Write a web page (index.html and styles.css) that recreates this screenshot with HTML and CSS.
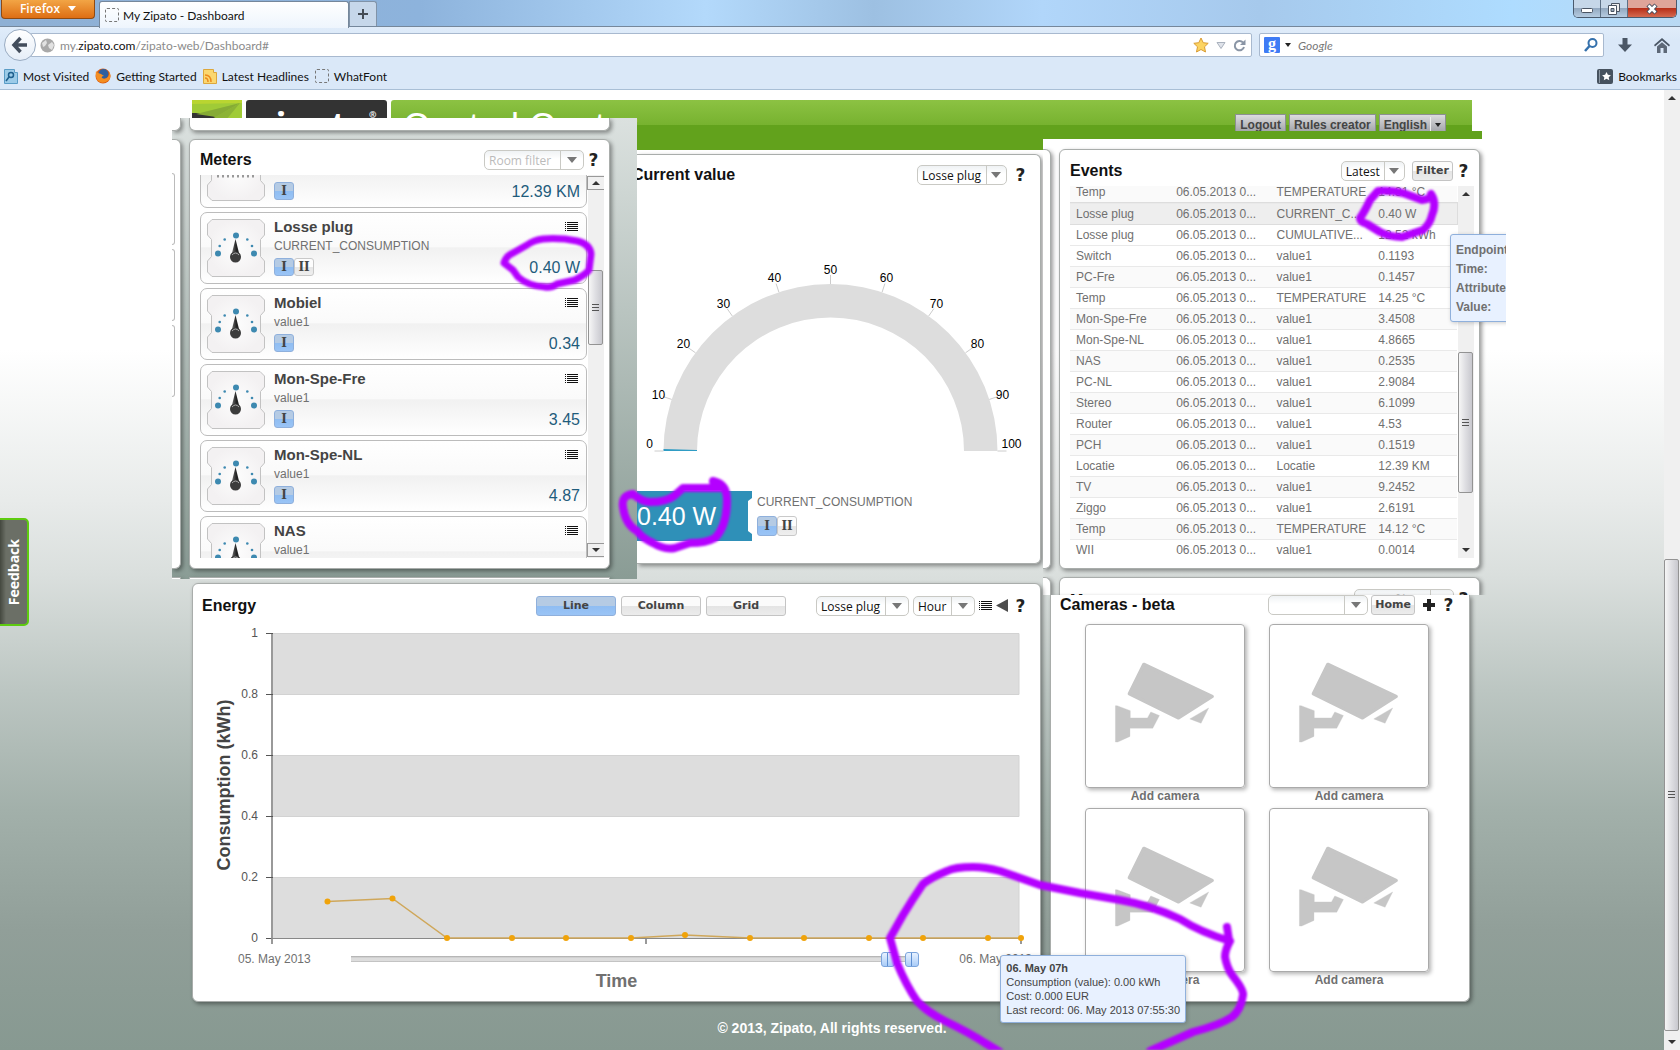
FILE: index.html
```html
<!DOCTYPE html>
<html lang="en">
<head>
    <meta charset="UTF-8">
    <meta name="viewport" content="width=device-width, initial-scale=1.0">
    <title>My Zipato - Dashboard</title>
    <link rel="stylesheet" href="styles.css">
</head>
<body>

    <!-- shared icons -->
    <svg width="0" height="0" class="defs">
        <defs>
            <radialGradient id="plate"><stop offset="0" stop-color="#fdfdfd"/><stop offset="1" stop-color="#f3f1f2"/></radialGradient>
            <linearGradient id="needle" x1="0" x2="1"><stop offset="0" stop-color="#777"/><stop offset="0.6" stop-color="#222"/></linearGradient>
        </defs>
        <symbol id="meter" viewBox="0 0 58 58">
            <path d="M5 .5h48l4.500 4.500v11l-4 4.500v17l4 4.500v11l-4.500 4.500H5L.5 53V42l4-4.500v-17L.5 16V5z" fill="url(#plate)" stroke="#c2c2c2"/>
            <g fill="#3d89b0">
                <circle cx="29" cy="16.500" r="3"/><circle cx="11" cy="34.500" r="3"/><circle cx="47" cy="34.500" r="3"/>
                <circle cx="17.700" cy="20.500" r="1.300"/><circle cx="40.300" cy="20.500" r="1.300"/>
                <circle cx="12.700" cy="27" r="1.300"/><circle cx="45" cy="27" r="1.300"/>
            </g>
            <path d="M28.500 20l4 16h-8z" fill="url(#needle)"/>
            <circle cx="28.500" cy="38" r="5.500" fill="#3c3c3c"/>
            <path d="M25 36q3.500-4 7 0" fill="none" stroke="#aaa"/>
        </symbol>
        <symbol id="list" viewBox="0 0 13 10">
            <path d="M0 .5h1M2 .5h11M0 2.500h1M2 2.500h11M0 4.500h1M2 4.500h11M0 6.500h1M2 6.500h11M0 8.500h1M2 8.500h11" stroke="#111"/>
        </symbol>
        <symbol id="camera" viewBox="0 0 474 490">
            <g fill="#c6c6c6" stroke="#c6c6c6" stroke-linejoin="round">
                <path d="M173 119L380 216L278 281L129 208z" stroke-width="10"/>
                <path d="M87 244h5l40 15v22h52l10-18 26 11-20 38h-69v25l-37 17h-7z" stroke-width="1"/>
                <path d="M369 251l-23 46-34-13z" stroke-width="1"/>
            </g>
        </symbol>
    </svg>

    <div class="chrome">
        <div class="titlebar">
            <button class="firefox">Firefox <i class="tri white"></i></button>
            <div class="tab"><i class="blank"></i>My Zipato - Dashboard</div>
            <button class="newtab" aria-label="New tab"><svg width="12" height="12" viewBox="0 0 12 12"><path d="M6 1v10M1 6h10" stroke="#444c55" stroke-width="2"/></svg></button>
            <div class="winbtns">
                <button class="min" aria-label="Minimize"><svg width="14" height="14" viewBox="0 0 14 14"><rect x="1.500" y="6.500" width="11" height="4" rx="1" fill="#fff" stroke="#4a5462"/></svg></button>
                <button class="max" aria-label="Restore"><svg width="14" height="14" viewBox="0 0 14 14"><path d="M4.500 1.500h8v8h-8z" fill="#eee" stroke="#4a5462"/><path d="M1.500 3.500h8v9h-8z" fill="#fff" stroke="#4a5462"/><path d="M4 6.500h3v3H4z" fill="#9ab" stroke="#4a5462"/></svg></button>
                <button class="close" aria-label="Close"><svg width="12" height="12" viewBox="0 0 12 12"><path d="M2 2l8 8M10 2l-8 8" stroke="#444b5c" stroke-width="4.500"/><path d="M2.500 2.500l7 7M9.500 2.500l-7 7" stroke="#fff" stroke-width="2.500"/></svg></button>
            </div>
        </div>

        <div class="navbar">
            <button class="back" aria-label="Back"><svg width="18" height="18" viewBox="0 0 18 18"><path d="M9.500 2L3 9l6.500 7M3 9h13" fill="none" stroke="#434d5c" stroke-width="3.500"/></svg></button>
            <div class="urlbar">
                <svg width="15" height="15" viewBox="0 0 15 15"><circle cx="7.500" cy="7.500" r="7" fill="#a9a9a9"/><path d="M2 5l4-3 1 3-2 3-2 1zM8 7l4-3 2 3-2 5-3-2z" fill="#e2e2e2"/></svg>
                <span class="url">my.<b>zipato.com</b>/zipato-web/Dashboard#</span>
                <svg width="16" height="16" viewBox="0 0 16 16"><path d="M8 1l2.200 4.700 5 .6-3.700 3.500 1 5.200L8 12.500 3.500 15l1-5.200L.8 6.300l5-.6z" fill="#fcd462" stroke="#d99c33"/></svg>
                <svg width="10" height="9" viewBox="0 0 10 9"><path d="M1 1.500h8L5 7.500z" fill="#dfe3ea" stroke="#a9b1bd"/></svg>
                <svg width="13" height="13" viewBox="0 0 13 13"><path d="M10 3.500A4.700 4.700 0 1 0 11 8" fill="none" stroke="#8a95a5" stroke-width="2"/><path d="M12.500.5v5.500H7z" fill="#8a95a5"/></svg>
            </div>
            <div class="search">
                <span class="g">g</span><i class="tri small"></i>
                <input type="text" placeholder="Google" aria-label="Search">
                <svg width="14" height="14" viewBox="0 0 14 14"><circle cx="8.500" cy="5" r="4" fill="none" stroke="#3571ac" stroke-width="2"/><path d="M5.500 8L1 13" stroke="#3571ac" stroke-width="2.500"/></svg>
            </div>
            <svg class="dl" width="14" height="14" viewBox="0 0 14 14"><path d="M4.500 0h5v6.500H14L7 14 0 6.500h4.500z" fill="#4b5766"/></svg>
            <svg width="16" height="15" viewBox="0 0 16 15"><path d="M8 0l8 7-1 1.500L8 2.500 1 8.500 0 7z" fill="#4b5766"/><path d="M3 8.500l5-4.300 5 4.300V15h-3.500v-5h-3v5H3z" fill="#5d6877"/></svg>
        </div>

        <div class="bookmarks">
            <a href="#"><svg width="14" height="15" viewBox="0 0 14 15"><path d="M.5.5h10v3h3v11H.5z" fill="#9ccbe8" stroke="#5a9cc6"/><circle cx="7" cy="6" r="2.500" fill="none" stroke="#1e5f8e" stroke-width="1.500"/><path d="M5 8l-3 4" stroke="#1e5f8e" stroke-width="1.500"/></svg>Most Visited</a>
            <a href="#"><svg width="16" height="16" viewBox="0 0 16 16"><circle cx="8" cy="8" r="7.500" fill="#d95b12"/><circle cx="8.500" cy="6" r="5" fill="#2e5f9f"/><path d="M1 3q2 3 5 3l3 2q-3 0-2 2 3 2 6-1 2-3 1-6 3 5 0 9-6 5-11 1Q0 9 1 3z" fill="#f48e21"/></svg>Getting Started</a>
            <a href="#"><svg width="14" height="15" viewBox="0 0 14 15"><path d="M.5.5h10v3h3v11H.5z" fill="#fbd76f" stroke="#dca73c"/><path d="M2 6q6 0 6 7M2 9q3 0 3 4" fill="none" stroke="#ec8a1c" stroke-width="1.500"/></svg>Latest Headlines</a>
            <a href="#"><i class="blank"></i>WhatFont</a>
            <a href="#" class="right"><svg width="16" height="15" viewBox="0 0 16 15"><rect width="16" height="15" rx="2" fill="#46525f"/><path d="M2.500 1v13" stroke="#8b97a3"/><path d="M9.500 3l1.400 2.800 3 .4-2.200 2 .6 3-2.800-1.500-2.700 1.500.5-3-2.200-2 3-.4z" fill="#fff"/></svg>Bookmarks</a>
        </div>
    </div>

    <div class="viewport">
        <div class="page">
            <header class="header">
                <svg class="leaf" width="50" height="31" viewBox="0 0 50 31"><path d="M0 0h50v31H0z" fill="#333"/><path d="M0 0h50v20l-8 11H20l6-13-12-5H0z" fill="#a0cb37"/><path d="M0 0h50v3L0 4z" fill="#b9d531"/><path d="M4 14L48 3 24 17z" fill="#86ab35"/><path d="M48 3L18 20l16 0z" fill="#8cb336"/></svg>
                <div class="logo">zipato<sup>®</sup></div>
                <div class="bar">
                    <h1>Control Center</h1>
                    <nav>
                        <button>Logout</button>
                        <button>Rules creator</button>
                        <button class="lang">English <span><i class="tri small"></i></span></button>
                    </nav>
                </div>
            </header>

            <div class="top">
                <section class="snip meters-snip">
                    <div class="slivers">
                        <div class="panel cut-top"></div>
                        <div class="panel tall"><i></i><i></i><i></i></div>
                        <div class="panel cut-bottom"></div>
                    </div>
                    <div class="stack">
                        <div class="panel cut-top"></div>
                        <div class="panel tall meters">
                            <div class="head">
                                <h2>Meters</h2>
                                <span class="combo w-room hint"><select aria-label="Room filter"><option>Room filter</option></select></span>
                                <button class="help" aria-label="Help">?</button>
                            </div>
                            <div class="scroller">
                                <div class="cards">
                                    <article class="card">
                                        <svg class="pic" viewBox="0 0 58 58"><path d="M5 .5h48l4.500 4.500v11l-4 4.500v17l4 4.500v11l-4.500 4.500H5L.5 53V42l4-4.500v-17L.5 16V5z" fill="url(#plate)" stroke="#c2c2c2"/><path d="M10 33h38" stroke="#999" stroke-width="3" stroke-dasharray="2 3"/></svg>
                                        <div class="info"><div class="pills"><button class="pill on">I</button></div></div>
                                        <div class="side"><svg width="13" height="10"><use href="#list"/></svg><strong>12.39 KM</strong></div>
                                    </article>
                                    <article class="card">
                                        <svg class="pic"><use href="#meter"/></svg>
                                        <div class="info"><h3>Losse plug</h3><p>CURRENT_CONSUMPTION</p><div class="pills"><button class="pill on">I</button><button class="pill">II</button></div></div>
                                        <div class="side"><svg width="13" height="10"><use href="#list"/></svg><strong>0.40 W</strong></div>
                                    </article>
                                    <article class="card">
                                        <svg class="pic"><use href="#meter"/></svg>
                                        <div class="info"><h3>Mobiel</h3><p>value1</p><div class="pills"><button class="pill on">I</button></div></div>
                                        <div class="side"><svg width="13" height="10"><use href="#list"/></svg><strong>0.34</strong></div>
                                    </article>
                                    <article class="card">
                                        <svg class="pic"><use href="#meter"/></svg>
                                        <div class="info"><h3>Mon-Spe-Fre</h3><p>value1</p><div class="pills"><button class="pill on">I</button></div></div>
                                        <div class="side"><svg width="13" height="10"><use href="#list"/></svg><strong>3.45</strong></div>
                                    </article>
                                    <article class="card">
                                        <svg class="pic"><use href="#meter"/></svg>
                                        <div class="info"><h3>Mon-Spe-NL</h3><p>value1</p><div class="pills"><button class="pill on">I</button></div></div>
                                        <div class="side"><svg width="13" height="10"><use href="#list"/></svg><strong>4.87</strong></div>
                                    </article>
                                    <article class="card">
                                        <svg class="pic"><use href="#meter"/></svg>
                                        <div class="info"><h3>NAS</h3><p>value1</p></div>
                                        <div class="side"><svg width="13" height="10"><use href="#list"/></svg></div>
                                    </article>
                                </div>
                                <div class="scroll boxed"><i class="tri up"></i><span class="thumb" style="top: 95px; height: 75px"></span><i class="tri"></i></div>
                            </div>
                        </div>
                        <div class="panel cut-bottom"></div>
                    </div>
                </section>

                <section class="snip gauge-snip">
                    <div class="panel gauge">
                        <div class="head">
                            <h2>Current value</h2>
                            <span class="combo tight"><select aria-label="Device"><option>Losse plug</option></select></span>
                            <button class="help" aria-label="Help">?</button>
                        </div>
                        <svg class="dial" viewBox="0 0 403 270">
                            <g transform="translate(193.500 261)">
                                <path d="M-167 0A167 167 0 0 1 167 0H133.500A133.500 133.500 0 0 0-133.500 0z" fill="#ddd"/>
                                <path d="M-167 0v-2l33.500 1v1z" fill="#2f9cc4"/>
                                <path d="M-176 0h9M167 0h9M-158.800-51.600l-8.600-2.800M-135-98.200l-7.400-5.200M-98.200-135l-5.200-7.400M-51.600-158.800l-2.800-8.600M0-167v-9M51.600-158.800l2.800-8.600M98.200-135l5.200-7.400M135-98.200l7.400-5.200M158.800-51.600l8.600-2.800" stroke="#ccc"/>
                                <g font-size="12" text-anchor="middle">
                                    <text x="-181" y="-3">0</text><text x="-172" y="-52">10</text><text x="-147" y="-103">20</text><text x="-107" y="-143">30</text><text x="-56" y="-169">40</text><text x="0" y="-177">50</text>
                                    <text x="56" y="-169">60</text><text x="106" y="-143">70</text><text x="147" y="-103">80</text><text x="172" y="-52">90</text><text x="181" y="-3">100</text>
                                </g>
                            </g>
                        </svg>
                        <div class="reading">
                            <output>0.40 W</output>
                            <div>
                                <p>CURRENT_CONSUMPTION</p>
                                <div class="pills"><button class="pill on">I</button><button class="pill">II</button></div>
                            </div>
                        </div>
                    </div>
                </section>

                <section class="snip events-snip">
                    <div class="strip"></div>
                    <div class="cols">
                        <div class="slivers">
                            <div class="panel tall"></div>
                            <div class="panel cut-bottom"></div>
                        </div>
                        <div class="stack">
                            <div class="panel tall events">
                                <div class="head">
                                    <h2>Events</h2>
                                    <span class="combo tight"><select aria-label="Period"><option>Latest</option></select></span>
                                    <button class="btn">Filter</button>
                                    <button class="help" aria-label="Help">?</button>
                                </div>
                                <div class="scroller">
                                    <table>
                                        <tbody>
                                            <tr><td>Temp</td><td>06.05.2013 0...</td><td>TEMPERATURE</td><td>14.31 °C</td></tr>
                                            <tr class="sel"><td>Losse plug</td><td>06.05.2013 0...</td><td>CURRENT_C...</td><td>0.40 W</td></tr>
                                            <tr><td>Losse plug</td><td>06.05.2013 0...</td><td>CUMULATIVE...</td><td>12.52 kWh</td></tr>
                                            <tr><td>Switch</td><td>06.05.2013 0...</td><td>value1</td><td>0.1193</td></tr>
                                            <tr><td>PC-Fre</td><td>06.05.2013 0...</td><td>value1</td><td>0.1457</td></tr>
                                            <tr><td>Temp</td><td>06.05.2013 0...</td><td>TEMPERATURE</td><td>14.25 °C</td></tr>
                                            <tr><td>Mon-Spe-Fre</td><td>06.05.2013 0...</td><td>value1</td><td>3.4508</td></tr>
                                            <tr><td>Mon-Spe-NL</td><td>06.05.2013 0...</td><td>value1</td><td>4.8665</td></tr>
                                            <tr><td>NAS</td><td>06.05.2013 0...</td><td>value1</td><td>0.2535</td></tr>
                                            <tr><td>PC-NL</td><td>06.05.2013 0...</td><td>value1</td><td>2.9084</td></tr>
                                            <tr><td>Stereo</td><td>06.05.2013 0...</td><td>value1</td><td>6.1099</td></tr>
                                            <tr><td>Router</td><td>06.05.2013 0...</td><td>value1</td><td>4.53</td></tr>
                                            <tr><td>PCH</td><td>06.05.2013 0...</td><td>value1</td><td>0.1519</td></tr>
                                            <tr><td>Locatie</td><td>06.05.2013 0...</td><td>Locatie</td><td>12.39 KM</td></tr>
                                            <tr><td>TV</td><td>06.05.2013 0...</td><td>value1</td><td>9.2452</td></tr>
                                            <tr><td>Ziggo</td><td>06.05.2013 0...</td><td>value1</td><td>2.6191</td></tr>
                                            <tr><td>Temp</td><td>06.05.2013 0...</td><td>TEMPERATURE</td><td>14.12 °C</td></tr>
                                            <tr><td>WII</td><td>06.05.2013 0...</td><td>value1</td><td>0.0014</td></tr>
                                        </tbody>
                                    </table>
                                    <div class="scroll"><i class="tri up"></i><span class="thumb" style="top: 166px; height: 141px"></span><i class="tri"></i></div>
                                </div>
                            </div>
                            <div class="panel cut-bottom meters-peek">
                                <h2>Meters</h2>
                                <span class="combo w-room hint"><select aria-label="Room filter"><option>Room filter</option></select></span>
                                <button class="help" aria-label="Help">?</button>
                            </div>
                        </div>
                    </div>
                    <div class="tip event-tip"><b>Endpoint:</b><b>Time:</b><b>Attribute:</b><b>Value:</b></div>
                </section>
            </div>

            <div class="bottom">
                <section class="panel energy">
                    <div class="head">
                        <h2>Energy</h2>
                        <div class="modes">
                            <button class="btn on">Line</button>
                            <button class="btn">Column</button>
                            <button class="btn">Grid</button>
                        </div>
                        <div class="tools">
                            <span class="combo"><select aria-label="Device"><option>Losse plug</option></select></span>
                            <span class="combo"><select aria-label="Interval"><option>Hour</option></select></span>
                            <svg width="13" height="14" viewBox="0 0 13 14"><use href="#list" y="2" width="13" height="10"/></svg>
                            <svg width="12" height="14" viewBox="0 0 12 14"><path d="M12 0v13L0 6.500z" fill="#4d4d4d"/></svg>
                        </div>
                        <button class="help" aria-label="Help">?</button>
                    </div>
                    <svg class="chart" viewBox="0 0 847 322">
                        <g fill="#ddd" stroke="#d2d2d2"><path d="M79 11.500h747v61H79zM79 133.500h747v61H79zM79 255.500h747v61H79z"/></g>
                        <path d="M79 11v312M453 317v6M828 317v6" stroke="#999" stroke-width="2"/>
                        <path d="M73 11.500h7M73 72.500h7M73 133.500h7M73 194.500h7M73 255.500h7M73 316.500h7" stroke="#555"/>
                        <path d="M78 316.500h749" stroke="#888"/>
                        <g font-size="12" fill="#555" text-anchor="end">
                            <text x="65" y="15">1</text><text x="65" y="76">0.8</text><text x="65" y="137">0.6</text><text x="65" y="198">0.4</text><text x="65" y="259">0.2</text><text x="65" y="320">0</text>
                        </g>
                        <text transform="translate(37 163) rotate(-90)" font-size="18" font-weight="bold" fill="#444" text-anchor="middle">Consumption (kWh)</text>
                        <path d="M134.500 279.500L199.500 276.500 254 316H438L492 313 557 316H828" fill="none" stroke="#cfa75a" stroke-width="1.500"/>
                        <g fill="#f0a30a">
                            <circle cx="134.500" cy="279.500" r="3"/><circle cx="199.500" cy="276.500" r="3"/><circle cx="254" cy="316" r="3"/><circle cx="319" cy="316" r="3"/><circle cx="373" cy="316" r="3"/><circle cx="438" cy="316" r="3"/><circle cx="492" cy="313" r="3"/>
                            <circle cx="557" cy="316" r="3"/><circle cx="611" cy="316" r="3"/><circle cx="676" cy="316" r="3"/><circle cx="730" cy="316" r="3"/><circle cx="795" cy="316" r="3"/><circle cx="828" cy="316" r="3"/>
                        </g>
                    </svg>
                    <div class="range">
                        <span>05. May 2013</span>
                        <div class="slider">
                            <input type="range" aria-label="From" min="0" max="1000" value="957">
                            <input type="range" aria-label="To" min="0" max="1000" value="1000">
                        </div>
                        <span>06. May 2013</span>
                    </div>
                    <div class="xtitle">Time</div>
                    <div class="tip energy-tip">
                        <b>06. May 07h</b>
                        <span>Consumption (value): 0.00 kWh</span>
                        <span>Cost: 0.000 EUR</span>
                        <span>Last record: 06. May 2013 07:55:30</span>
                    </div>
                </section>

                <section class="panel cameras">
                    <div class="head">
                        <h2>Cameras - beta</h2>
                        <span class="combo w-room"><select aria-label="Camera"><option></option></select></span>
                        <button class="btn">Home</button>
                        <svg width="12" height="12" viewBox="0 0 12 12"><path d="M6 0v12M0 6h12" stroke="#222" stroke-width="4"/></svg>
                        <button class="help" aria-label="Help">?</button>
                    </div>
                    <div class="cams">
                        <a href="#"><svg viewBox="0 0 474 490"><use href="#camera"/></svg>Add camera</a>
                        <a href="#"><svg viewBox="0 0 474 490"><use href="#camera"/></svg>Add camera</a>
                        <a href="#"><svg viewBox="0 0 474 490"><use href="#camera"/></svg>Add camera</a>
                        <a href="#"><svg viewBox="0 0 474 490"><use href="#camera"/></svg>Add camera</a>
                    </div>
                </section>
            </div>

            <footer>© 2013, Zipato, All rights reserved.</footer>
        </div>

        <div class="scroll page-scroll"><i class="tri up"></i><span class="thumb" style="top: 469px; height: 472px"></span><i class="tri"></i></div>
    </div>

    <button class="feedback">Feedback</button>

    <!-- pen marks -->
    <svg class="marks" viewBox="0 0 1680 1050">
        <path d="M543 239C556 238 567 239 577 241Q590 244 591 254L589 270Q585 275 575 280L557 284Q552 288 545 287Q528 286 518 277L513 270 504 263Q506 256 513 253L527 245Q534 240 543 239z" stroke-width="7"/>
        <path d="M713 481Q727 484 727 500Q727 526 715 538Q706 543 690 543L675 548Q664 550 653 543Q642 538 637 531Q625 524 623 507Q621 495 633 494Q642 502 650 502Q666 502 674 496L683 488H722" stroke-width="8"/>
        <path d="M1432 196Q1427 200 1422 200L1403 193Q1390 190 1378 191L1370 200Q1365 211 1360 218Q1360 222 1367 224L1380 232Q1390 237 1402 237L1423 230Q1430 224 1432 215Q1437 203 1431 194" stroke-width="8"/>
        <path d="M1227 927Q1229 940 1230 941Q1200 932 1180 919Q1150 905 1120 900L1080 893 1040 885 1000 871Q985 867 973 867Q955 867 947 871Q930 878 923 884Q912 900 903 915L890 938 897 963Q906 985 917 1001Q927 1012 945 1021Q970 1033 985 1043L1000 1052M1230 941Q1225 950 1225 957Q1227 968 1232 975Q1244 990 1243 995Q1241 1010 1232 1017Q1220 1025 1193 1032L1150 1051" stroke-width="8"/>
    </svg>

</body>
</html>
```

FILE: styles.css
```css
* {
    box-sizing: border-box;
    margin: 0;
    padding: 0;
}
body {
    min-height: 100vh;
    display: flex;
    flex-direction: column;
    position: relative;
    overflow: hidden;
    background: white;
    font-family: "Liberation Sans", Arial, sans-serif;
    font-size: 12px;
    color: #707070;
}
button, select, input { font: inherit; color: inherit; }
button { border: none; background: none; cursor: pointer; }
a { color: inherit; text-decoration: none; }
svg { display: block; flex: none; }
.defs { position: absolute; }

.tri {
    border: 5px solid transparent;
    border-top: 6px solid #777;
    border-bottom: none;
}
.tri.small { border-width: 4px 3px 0; border-top-color: #222; }
.tri.white { border-width: 5px 4px 0; border-top-color: white; }
.blank {
    width: 14px;
    height: 14px;
    border: 1px dashed #777;
    border-radius: 2px;
}

/* browser window */
.chrome {
    font-family: Lato, "Open Sans", sans-serif;
    color: #111;
    background: linear-gradient(#eef5fd, #dae8f8 40px);
    border-bottom: 1px solid #a9bfd6;
}
.titlebar {
    display: flex;
    height: 27px;
    padding-left: 1px;
    border-bottom: 1px solid #75879b;
    background: linear-gradient(90deg, #8fb0d4, #8db3dc 25%, #b3d9fb 42%, #9dc0e2 52%, #b1d6fa 62%, #a6c9ec 75%, #aedcff 90%, #b9d9f3);
}
.firefox {
    display: flex;
    align-items: center;
    justify-content: center;
    gap: 8px;
    width: 94px;
    height: 19px;
    margin-right: 4px;
    padding-bottom: 2px;
    border: 1px solid #8f4a12;
    border-top: none;
    border-radius: 0 0 4px 4px;
    background: linear-gradient(#f2a545, #de6e14);
    color: white;
    font-family: "Open Sans", sans-serif;
    font-weight: 600;
}
.tab {
    display: flex;
    align-items: center;
    gap: 4px;
    width: 250px;
    height: 27px;
    margin-top: 1px;
    padding-left: 5px;
    border: 1px solid #75879b;
    border-bottom: none;
    border-radius: 3px 3px 0 0;
    background: linear-gradient(white, #eef5fd);
}
.newtab {
    display: flex;
    align-items: center;
    justify-content: center;
    width: 28px;
    margin-top: 1px;
    border: 1px solid #8093a8;
    border-bottom: none;
    border-radius: 0 3px 0 0;
    background: #c6d7ea;
}
.winbtns {
    display: flex;
    height: 18px;
    margin: 0 3px 0 auto;
    border: 1px solid #4a5a6d;
    border-top: none;
    border-radius: 0 0 5px 5px;
    overflow: hidden;
}
.winbtns button {
    display: flex;
    align-items: center;
    justify-content: center;
    width: 27px;
    border-right: 1px solid #5d7186;
    background: linear-gradient(#c6d7e8 50%, #93a9c0 50%, #b5cbe0);
}
.winbtns .close {
    width: 48px;
    border-right: none;
    background: linear-gradient(#dfa59a 50%, #b8301a 50%, #d56a50);
}
.navbar {
    display: flex;
    align-items: center;
    height: 36px;
    padding: 0 10px 0 4px;
}
.back {
    display: flex;
    align-items: center;
    justify-content: center;
    width: 32px;
    height: 32px;
    margin-right: -6px;
    position: relative;
    border: 1px solid #9aacc2;
    border-radius: 50%;
    background: linear-gradient(white, #e6eef8);
}
.urlbar, .search {
    display: flex;
    align-items: center;
    height: 24px;
    border: 1px solid #a8b9cf;
    border-radius: 2px;
    background: white;
}
.urlbar {
    flex: 1;
    gap: 7px;
    margin-right: 7px;
    padding: 0 5px 0 9px;
}
.url { flex: 1; margin-left: -2px; color: #8b8b8b; }
.url b { color: #111; font-weight: normal; }
.search { width: 345px; gap: 5px; padding: 0 5px 0 4px; }
.search .g {
    width: 16px;
    height: 16px;
    border-radius: 1px;
    background: #3f7cf5;
    color: white;
    font: bold 16px/13px "Liberation Serif", serif;
    text-align: center;
}
.search input {
    flex: 1;
    min-width: 0;
    padding-left: 2px;
    border: none;
    font-style: italic;
    background: none;
}
.search input::placeholder { color: #777; }
.dl { margin: 0 22px 0 14px; }
.bookmarks {
    display: flex;
    gap: 6px;
    height: 26px;
    padding: 0 3px 0 4px;
}
.bookmarks a { display: flex; align-items: center; gap: 5px; white-space: nowrap; }
.bookmarks .right { margin-left: auto; }

/* page */
.viewport { display: flex; flex: 1; }
.page {
    flex: 1;
    min-width: 0;
    padding-top: 10px;
    background: linear-gradient(white 260px, #e8ebea 410px, #dadfdd 485px, #bcc6c2 600px, #a2b0aa 720px, #919f99 840px, #879991);
}
.header {
    display: grid;
    grid-template-columns: 50px 141px 1fr;
    column-gap: 4px;
    height: 31px;
    margin: 0 11.54%;
    overflow: hidden;
}
.logo {
    border-radius: 3px 3px 0 0;
    background: #333;
    color: white;
    font: bold 36px/50px "Open Sans", sans-serif;
    padding-left: 12px;
    white-space: nowrap;
}
.logo sup { font-size: 9px; line-height: 0; vertical-align: 20px; }
.bar {
    display: flex;
    justify-content: space-between;
    padding: 0 26px 0 12px;
    border-radius: 3px 0 0 0;
    background: linear-gradient(#8cc243, #77b22f 25px, #62a21c 25px);
}
.bar h1 { color: white; font-size: 36px; font-weight: normal; line-height: 54px; }
.bar nav { display: flex; gap: 3px; padding-top: 14px; }
.bar button {
    height: 22px;
    padding: 0 4px;
    border: 1px solid #8c8f92;
    background: linear-gradient(#dcdcde, #97999f);
    color: #444;
    font-weight: bold;
}
.bar .lang { display: flex; align-items: center; gap: 3px; }
.lang span { border-left: 1px solid #eee; padding: 6px 0 6px 4px; }
.lang .tri { display: block; }

.top {
    display: grid;
    grid-template-columns: minmax(0, 172fr) minmax(0, 465fr) minmax(0, 406fr) minmax(0, 463fr) minmax(0, 158fr);
    align-items: start;
}
.snip { position: relative; display: flex; overflow: hidden; }
.meters-snip {
    grid-column: 2;
    gap: 8px;
    margin-top: -13px;
    padding-right: 27px;
    background: linear-gradient(#dbe1df, #8a9c95);
}
.gauge-snip { grid-column: 3; padding: 4px 2px 16px 0; border-top: 19px solid #62a21c; }
.events-snip { grid-column: 4; flex-direction: column; }
.strip { height: 8px; margin-right: 24px; background: #62a21c; }
.cols { display: flex; gap: 8px; padding: 10px 26px 0 0; }

.panel {
    position: relative;
    border: 1px solid #a9adab;
    border-radius: 6px;
    background: white;
    box-shadow: 2px 2px 4px rgba(0, 0, 0, 0.4);
}
.slivers { width: 9px; }
.events-snip .slivers { width: 8px; }
.slivers, .stack { display: flex; flex-direction: column; gap: 8px; }
.stack { flex: 1; min-width: 0; }
.slivers .panel { border-left: none; border-top-left-radius: 0; border-bottom-left-radius: 0; }
.cut-top { height: 13px; border-top: none; border-top-left-radius: 0; border-top-right-radius: 0; }
.meters-snip .tall { height: 430px; padding-top: 33px; }
.meters-snip .slivers i {
    display: block;
    width: 3px;
    height: 72px;
    margin-bottom: 4px;
    border: 1px solid #bbb;
    border-left: none;
    border-radius: 0 6px 6px 0;
}
.meters-snip .cut-bottom { height: 2px; border-bottom: none; }
.events-snip .tall { height: 420px; }
.events-snip .cut-bottom { height: 18px; border-bottom: none; border-bottom-left-radius: 0; border-bottom-right-radius: 0; }

.head { display: flex; align-items: center; height: 20px; }
h2 { font-size: 16px; line-height: 20px; color: #111; margin-right: auto; white-space: nowrap; }
.help { width: 11px; font: bold 17px/20px "DejaVu Sans", sans-serif; color: #222; }

.combo {
    position: relative;
    display: block;
    height: 20px;
    border: 1px solid #c9c9c4;
    border-radius: 5px;
    background: linear-gradient(#eff2f4, white 8px);
}
.combo select {
    appearance: none;
    display: block;
    width: 100%;
    height: 18px;
    padding: 0 27px 0 4px;
    border: none;
    background: none;
    color: #111;
    font-family: "Open Sans", "Noto Sans", sans-serif;
}
.combo::before {
    content: "";
    position: absolute;
    top: 0;
    right: 22px;
    bottom: 0;
    border-left: 1px solid #c9c9c4;
}
.combo::after {
    content: "";
    position: absolute;
    top: 6px;
    right: 6px;
    border: 5px solid transparent;
    border-top: 6px solid #777;
    border-bottom: none;
}
.tight select { padding-right: 24px; }
.tight::before { right: 19px; }
.tight::after { right: 5px; }
.w-room { width: 100px; }
.hint select { color: #bbb; }
.btn {
    height: 20px;
    padding: 0 3px;
    border: 1px solid #c4c4c4;
    border-radius: 3px;
    background: linear-gradient(#fbfbfb 50%, #e4e4e4 50%, #ececec);
    color: #444;
    font: bold 11px/16px "DejaVu Sans", sans-serif;
}
.btn.on, .pill.on {
    border-color: #8fb0dc;
    background: linear-gradient(#b5cbe4 50%, #8fbdf2 50%, #9ac4f6);
}
.pills { display: flex; }
.pill {
    width: 20px;
    height: 18px;
    border: 1px solid #c9c9c9;
    border-radius: 3px;
    background: linear-gradient(#fdfdfd 50%, #e6e6e6 50%, #efefef);
    color: #444;
    font: bold 12px/14px "DejaVu Serif", serif;
}

.scroll {
    position: relative;
    display: flex;
    flex-direction: column;
    align-items: center;
    justify-content: space-between;
    width: 16px;
    padding: 6px 0;
    background: #f0f0f0;
}
.scroll .tri { border-width: 4px 4px 0; border-top-color: #333; }
.scroll .up { border-width: 0 4px 4px; border-bottom: 4px solid #333; }
.thumb {
    position: absolute;
    left: 0;
    width: 15px;
    border: 1px solid #939393;
    border-radius: 2px;
    background: linear-gradient(90deg, #f6f6f6, #dedee2 50%, #c8c8ce);
}
.thumb::after {
    content: "";
    position: absolute;
    top: calc(50% - 4px);
    left: 3px;
    width: 7px;
    height: 8px;
    background: repeating-linear-gradient(#555 0 1px, transparent 1px 3px);
}
.boxed .tri { outline: 1px solid #999; outline-offset: 4px; }
.scroller { display: flex; justify-content: space-between; overflow: hidden; }

.meters-snip .meters { padding: 10px 5px 0 10px; }
.meters .combo { margin-right: 4px; }
.meters .help { margin-right: 5px; }
.meters .scroller { height: 383px; margin-top: 5px; }
.cards {
    display: flex;
    flex-direction: column;
    flex: 1;
    gap: 4px;
    margin: -39px 1px 0 0;
}
.card {
    display: flex;
    flex: none;
    height: 72px;
    padding: 6px;
    border: 1px solid #bcbcbc;
    border-radius: 7px;
    background: linear-gradient(white, #fafafa 48%, #f1f1f1 50%, white);
}
.pic { width: 58px; height: 58px; margin-right: 9px; }
.info { display: flex; flex-direction: column; }
.info h3 { font-size: 15px; line-height: 16px; color: #444; }
.info p { line-height: 22px; }
.info .pills { margin: auto 0 1px; }
.side {
    display: flex;
    flex-direction: column;
    align-items: flex-end;
    justify-content: space-between;
    margin-left: auto;
    padding-top: 3px;
}
.side svg { margin-right: 2px; }
.side strong { font-weight: normal; font-size: 16px; line-height: 18px; color: #1f5c7c; }

/* gauge */
.gauge {
    flex: 1;
    min-width: 0;
    height: 410px;
    padding-top: 10px;
    border-left: none;
    border-radius: 0 6px 6px 0;
}
.gauge .head { padding-right: 14px; }
.gauge h2 { margin-left: -5px; }
.gauge .combo { margin-right: 8px; }
.dial { width: 100%; margin-top: 5px; fill: black; }
.reading { display: flex; gap: 5px; margin-top: 31px; }
.reading output {
    width: 115px;
    height: 50px;
    background: #2f90b8;
    clip-path: polygon(0 0, 100% 0, 100% 7px, 111px 10px, 111px 40px, 100% 43px, 100% 100%, 0 100%);
    color: white;
    font-size: 25px;
    line-height: 50px;
}
.reading p { line-height: 22px; }
.reading .pills { margin-top: 3px; }
.reading .pill { height: 20px; }

/* events */
.events { padding: 11px 5px 0 10px; }
.events .combo { margin-right: 7px; }
.events .btn { margin-right: 5px; }
.events .help { margin-right: 5px; }
.events .scroller { height: 372px; margin-top: 5px; }
table { flex: 1; table-layout: fixed; border-collapse: collapse; margin: -4px 1px 0 0; }
td {
    width: 26%;
    height: 21px;
    padding: 0 6px;
    border-bottom: 1px solid #e9e9e9;
    line-height: 20px;
    white-space: nowrap;
}
td:last-child { width: 22%; }
tr:nth-child(odd) { background: #fafafa; }
tr:nth-child(3) { background: white; }
.events .sel { background: #eee; outline: 1px solid #ddd; }
.meters-peek { display: flex; padding: 11px 10px 0 10px; overflow: hidden; }
.meters-peek h2 { line-height: 24px; }
.meters-peek .combo { margin-right: 4px; }

.tip {
    position: absolute;
    display: flex;
    flex-direction: column;
    border: 1px solid #8fb0dc;
    border-radius: 3px;
    background: #e8f1ff;
    box-shadow: 1px 1px 4px rgba(0, 0, 0, 0.2);
    white-space: nowrap;
}
.event-tip { top: 103px; right: -14px; width: 70px; padding: 6px 5px 4px; line-height: 19px; }
.energy-tip {
    z-index: 2;
    top: 371px;
    right: -146px;
    padding: 5px;
    color: #444;
    font-size: 11px;
    line-height: 14px;
}

/* bottom row */
.bottom {
    display: grid;
    grid-template-columns: minmax(0, 192fr) minmax(0, 849fr) minmax(0, 9fr) minmax(0, 420fr) minmax(0, 194fr);
    margin-top: -12px;
}
.energy { grid-column: 2; height: 419px; padding-top: 12px; }
.energy .head { padding: 0 14px 0 9px; }
.modes { display: flex; gap: 5px; }
.modes .btn { width: 80px; }
.tools { display: flex; align-items: center; gap: 4px; margin: 0 7px 0 30px; }
.chart { width: 100%; margin-top: 6px; }
.range { display: flex; align-items: center; gap: 40px; height: 16px; margin-top: 7px; padding: 0 8px 0 45px; }
.slider {
    flex: 1;
    display: grid;
    align-items: center;
    background: linear-gradient(#aaa, #ddd 2px, #ddd 5px, #aaa) center / 100% 6px no-repeat;
}
.slider input {
    grid-area: 1 / 1;
    appearance: none;
    min-width: 0;
    background: none;
    pointer-events: none;
}
.slider input::-webkit-slider-thumb {
    appearance: none;
    width: 14px;
    height: 15px;
    border: 1px solid #7ba4dc;
    border-radius: 3px;
    background: linear-gradient(90deg, transparent 5px, #5e8fd0 5px, #5e8fd0 6px, transparent 6px), linear-gradient(#e8f2ff, #a9ccf8);
    pointer-events: auto;
}
.xtitle { margin-top: 4px; text-align: center; font-size: 18px; line-height: 20px; font-weight: bold; }

.cameras { grid-column: 4; height: 407px; margin-top: 12px; border-top: none; border-radius: 0 0 6px 6px; }
.cameras .head { padding: 0 15px 0 9px; gap: 8px; }
.cameras .combo { margin-right: -5px; }
.cams {
    display: grid;
    grid-template-columns: 1fr 1fr;
    gap: 4px 24px;
    padding: 9px 40px 0 34px;
}
.cams a { text-align: center; font-weight: bold; line-height: 16px; }
.cams svg {
    width: 100%;
    height: 164px;
    border: 1px solid #aaa;
    border-radius: 4px;
    box-shadow: 2px 2px 4px rgba(0, 0, 0, 0.3);
}
footer { margin-top: 16px; text-align: center; color: white; font-size: 14px; line-height: 20px; font-weight: bold; }

.feedback {
    position: absolute;
    top: 518px;
    left: -2px;
    width: 31px;
    height: 108px;
    border: 2px solid #5ecb10;
    border-radius: 0 5px 5px 0;
    background: linear-gradient(90deg, #44483f, #6b6f66 6px);
    color: white;
    font: bold 14px "Open Sans", sans-serif;
    writing-mode: sideways-lr;
}
.marks {
    position: absolute;
    top: 0;
    left: 0;
    width: 100%;
    pointer-events: none;
    z-index: 3;
    fill: none;
    stroke: #b400ff;
    stroke-linecap: round;
    stroke-linejoin: round;
    filter: blur(1px);
}
```
